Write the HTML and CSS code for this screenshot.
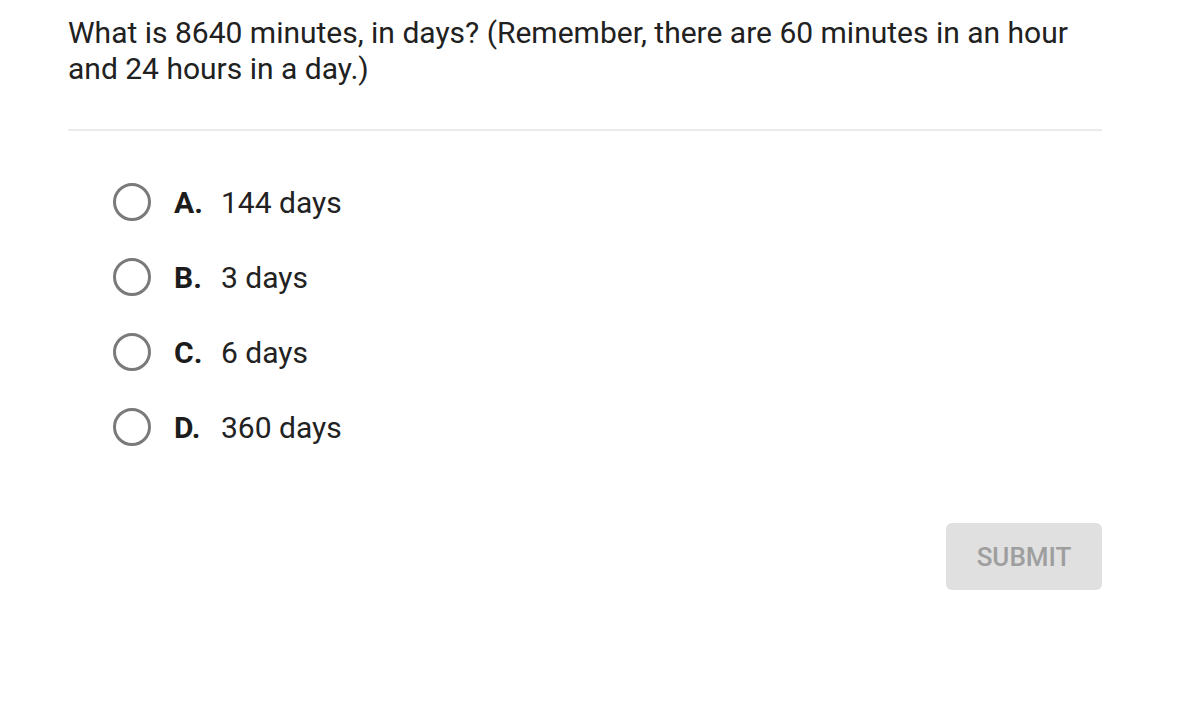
FILE: index.html
```html
<!DOCTYPE html>
<html>
<head>
<meta charset="utf-8">
<link rel="stylesheet" href="styles.css">
</head>
<body>
<div class="page">
  <p class="question">What is 8640 minutes, in days? (Remember, there are 60 minutes in an hour and 24 hours in a day.)</p>
  <hr class="divider">
  <ul class="options">
    <li class="option"><span class="radio"></span><span class="letter">A.</span><span class="answer">144 days</span></li>
    <li class="option"><span class="radio"></span><span class="letter">B.</span><span class="answer">3 days</span></li>
    <li class="option"><span class="radio"></span><span class="letter">C.</span><span class="answer">6 days</span></li>
    <li class="option"><span class="radio"></span><span class="letter">D.</span><span class="answer">360 days</span></li>
  </ul>
  <div class="actions">
    <button class="submit">SUBMIT</button>
  </div>
</div>
</body>
</html>
```
FILE: styles.css
```css
html, body {
  margin: 0;
  padding: 0;
  background: #ffffff;
}
body {
  font-family: Roboto, "Liberation Sans", sans-serif;
  color: #222222;
}
.page {
  width: 1034px;
  padding: 15px 0 0 68px;
}
.question {
  margin: 0;
  font-size: 30px;
  line-height: 36px;
  color: #212121;
}
.divider {
  border: 0;
  height: 2px;
  background: #ebebeb;
  margin: 42px 0 0 0;
}
.options {
  list-style: none;
  margin: 0;
  padding: 53px 0 0 45px;
  display: flex;
  flex-direction: column;
  gap: 39px;
}
.option {
  display: flex;
  align-items: center;
  height: 36px;
  font-size: 30px;
}
.radio {
  width: 32px;
  height: 32px;
  border: 3px solid #7a7a7a;
  border-radius: 50%;
  box-sizing: content-box;
  flex: none;
}
.letter {
  font-weight: 700;
  margin-left: 23px;
  width: 47px;
  color: #1c1c1c;
}
.answer {
  color: #222222;
}
.actions {
  display: flex;
  justify-content: flex-end;
  margin-top: 78px;
}
.submit {
  width: 156px;
  height: 67px;
  border: 0;
  border-radius: 6px;
  background: #e0e0e0;
  color: #9e9e9e;
  font-family: Roboto, "Liberation Sans", sans-serif;
  font-size: 26px;
  font-weight: 500;
}
```
